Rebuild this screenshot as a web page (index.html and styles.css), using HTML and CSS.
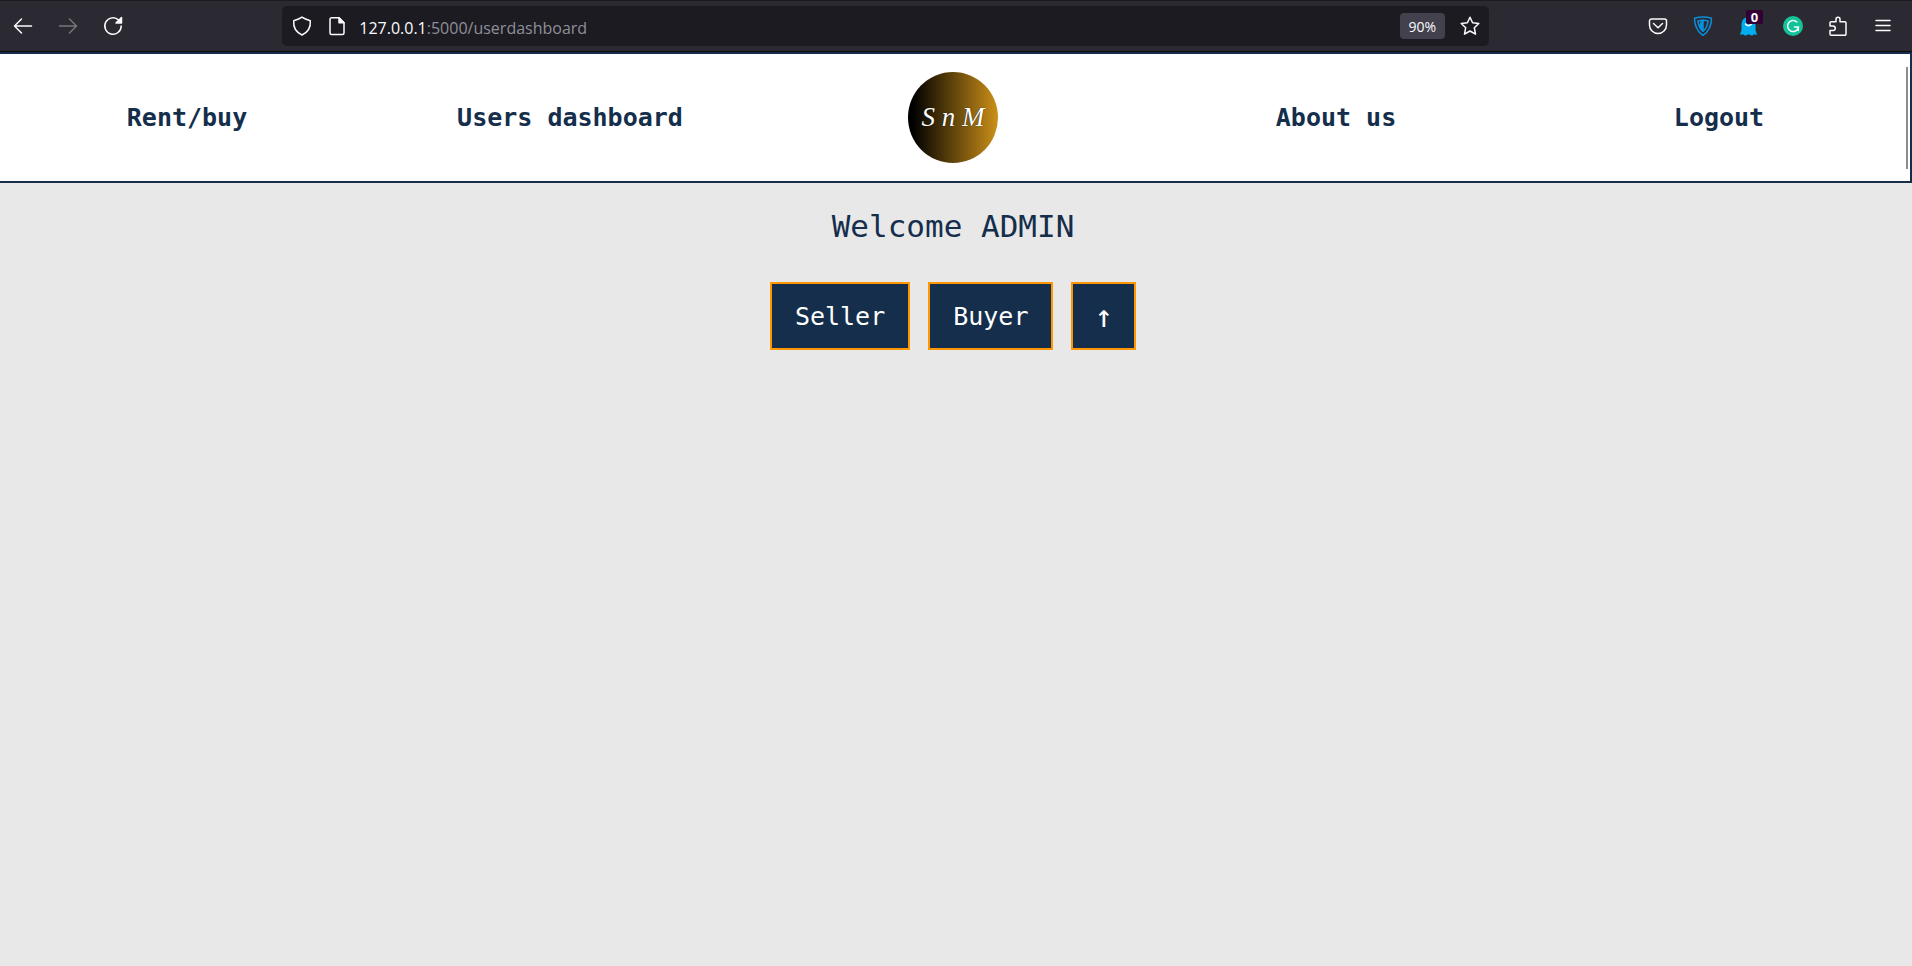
FILE: index.html
```html
<!DOCTYPE html>
<html lang="en">
<head>
<meta charset="utf-8">
<title>Users dashboard</title>
<link rel="stylesheet" href="styles.css">
</head>
<body>
<div class="toolbar">
  <div class="tools">
    <button class="tool" aria-label="Back"><svg viewBox="0 0 20 20"><path d="M18.500 10H1.500M8.500 3L1.500 10l7 7"/></svg></button>
    <button class="tool tool-off" aria-label="Forward"><svg viewBox="0 0 20 20"><path d="M1.500 10h17M11.500 3l7 7-7 7"/></svg></button>
    <button class="tool" aria-label="Reload"><svg viewBox="0 0 20 20"><path d="M18.200 10a8.200 8.200 0 1 1-2.500-5.900"/><path class="solid" d="M18.500 1.500v5.500h-5.500z"/></svg></button>
  </div>
  <div class="address">
    <svg viewBox="0 0 20 20"><path d="M10 1.200C12.500 3 15.500 4 18.300 4.800c.5 6-1.800 11.200-8.300 14.200C3.500 16 1.200 10.800 1.700 4.800 4.500 4 7.500 3 10 1.200z"/></svg>
    <svg viewBox="0 0 20 20"><path d="M4.500 1.800H12l5 5V17a1.500 1.500 0 0 1-1.500 1.500h-11A1.500 1.500 0 0 1 3 17V3.300a1.500 1.500 0 0 1 1.500-1.500z"/><path class="solid" d="M12 1.800l5 5h-5z"/></svg>
    <div class="url"><span class="url-host">127.0.0.1</span>:5000/userdashboard</div>
    <button class="zoom-level">90%</button>
    <button class="star" aria-label="Bookmark"><svg viewBox="0 0 20 20"><path d="M10 1.200l2.600 5.600 6.200.7-4.500 4.200 1.200 6.500-5.500-3.200-5.500 3.200 1.200-6.500L1.200 7.500l6.200-.7z"/></svg></button>
  </div>
  <div class="tools">
    <button class="tool" aria-label="Pocket"><svg viewBox="0 0 20 20"><path d="M3.500 3h13a2 2 0 0 1 2 2v4a8.500 8.500 0 0 1-17 0V5a2 2 0 0 1 2-2zM5.500 7.500l4.500 4.200 4.500-4.200"/></svg></button>
    <button class="tool" aria-label="Shield"><svg class="blue" viewBox="0 0 20 20"><path d="M1.500 2.200C7 .6 13 .6 18.500 2.200 18.500 9.500 15.500 15.500 10 19.300 4.500 15.500 1.500 9.500 1.500 2.200z"/><path d="M5 5q5-1.300 10 0-.5 6.500-5 10.300Q5.500 11.500 5 5z"/><path class="fill" d="M10 4.300V15.300Q7.500 13 6.500 10L9 4.300z"/></svg></button>
    <button class="tool" aria-label="Ghostery"><svg viewBox="0 0 20 20"><path fill="#00aef0" stroke="none" d="M3.500 8a7 7 0 0 1 14 0v6l1.500 5-3-.8-2 1.500L10.500 18.200 7.500 19.700l-2.500-1.500-3 .8L3.500 14z"/><path d="M7.500 8q3 3.500 6 0"/></svg><span class="badge">0</span></button>
    <button class="tool" aria-label="Grammarly"><svg viewBox="0 0 20 20"><circle cx="10" cy="10" r="10" fill="#15c39a" stroke="none"/><path d="M13.800 6a5.500 5.500 0 1 0 1.700 5H11.500M15.300 11v3.500"/></svg></button>
    <button class="tool" aria-label="Extensions"><svg viewBox="0 0 20 20"><path d="M2 8.500V7a1.200 1.200 0 0 1 1.200-1.200H8V3.200a2 2 0 0 1 4 0v2.600h4.800A1.200 1.200 0 0 1 18 7v11a1.200 1.200 0 0 1-1.200 1.200H3.200A1.200 1.200 0 0 1 2 18v-3.500h3a2.200 2.200 0 0 0 0-4.500H2z"/></svg></button>
    <button class="tool" aria-label="Menu"><svg viewBox="0 0 20 20"><path d="M3 4.500h14M3 9.500h14M3 14.500h14"/></svg></button>
  </div>
</div>
<nav class="nav">
  <a class="nav-link" href="#">Rent/buy</a>
  <a class="nav-link" href="#">Users dashboard</a>
  <a class="nav-logo" href="#">S n M</a>
  <a class="nav-link" href="#">About us</a>
  <a class="nav-link" href="#">Logout</a>
  <span class="thumb"></span>
</nav>
<main class="main">
  <h1 class="welcome">Welcome ADMIN</h1>
  <div class="actions">
    <button class="action">Seller</button>
    <button class="action">Buyer</button>
    <button class="action action-top">↑</button>
  </div>
</main>
</body>
</html>
```
FILE: styles.css
```css
* { box-sizing: border-box; }
body {
  margin: 0;
  background: #e8e8e8;
  color: #142e4b;
  font-family: "DejaVu Sans Mono", monospace;
}
button { margin: 0; padding: 0; border: 0; background: none; color: inherit; font: inherit; }
svg { display: block; width: 20px; height: 20px; fill: none; stroke: currentColor; stroke-width: 1.5; stroke-linecap: round; stroke-linejoin: round; }
.solid { fill: currentColor; }

.toolbar {
  display: flex;
  align-items: center;
  justify-content: space-between;
  height: 52px;
  padding: 0 6px 0 0;
  border-top: 1px solid #1c1b22;
  border-bottom: 1px solid #0c0c0d;
  background: #2b2a33;
  color: #fbfbfe;
  font-family: "Open Sans", sans-serif;
}
.tools { display: flex; }
.tool { position: relative; display: grid; place-items: center; width: 45px; height: 40px; }
.tool-off { color: #77767d; }
.blue { color: #0a8fdc; }
.blue .fill { fill: #0a8fdc; }
.badge {
  position: absolute;
  top: 4px;
  right: 8px;
  width: 17px;
  border-radius: 2px;
  background: #330033;
  font-size: 13px;
  font-weight: 700;
  line-height: 14px;
}
.address {
  display: flex;
  align-items: center;
  gap: 15px;
  width: 63.3%;
  height: 40px;
  padding: 0 9px 0 10px;
  border-radius: 5px;
  background: #1c1b22;
}
.url { flex: 1; margin-left: -3px; padding-top: 3px; color: #8f8f98; font-size: 16px; line-height: 24px; }
.url-host { color: #fbfbfe; }
.zoom-level { width: 45px; height: 26px; border-radius: 4px; background: #42414d; font-size: 14px; }

.nav {
  position: relative;
  display: grid;
  grid-template-columns: repeat(5, 1fr);
  column-gap: 9px;
  align-items: center;
  justify-items: center;
  padding: 18px 4px 18px 0;
  border: solid #142e4b;
  border-width: 2px 2px 2px 0;
  background: #fff;
}
.nav-link { color: #142e4b; font-size: 25px; font-weight: 700; text-decoration: none; }
.nav-logo {
  width: 90px;
  height: 91px;
  border-radius: 50%;
  background: linear-gradient(90deg, #000 5%, #cc9018);
  color: #fff;
  font: italic 27px/91px "Liberation Serif", serif;
  text-align: center;
  text-decoration: none;
  text-shadow: 0 0 1px #000;
}
.thumb { position: absolute; top: 13px; right: 2px; bottom: 12px; width: 2px; background: #8c8c8c; }

.main { padding: 23px 6px 24px 0; text-align: center; }
.welcome { margin: 0 0 36px; font-size: 31px; font-weight: 400; line-height: 40px; }
.actions { display: flex; justify-content: center; gap: 18px; }
.action {
  height: 68px;
  padding: 0 23px;
  border: 2px solid #ff9800;
  background: #142e4b;
  color: #fff;
  font-size: 25px;
}
.action-top { padding: 0 21px; font-size: 31px; }
```
